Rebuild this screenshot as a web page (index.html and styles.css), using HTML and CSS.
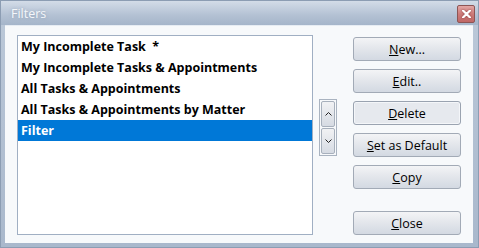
FILE: index.html
```html
<!DOCTYPE html>
<html lang="en">
<head>
    <meta charset="UTF-8">
    <meta name="viewport" content="width=device-width, initial-scale=1.0">
    <title>Filters</title>
    <link rel="stylesheet" href="styles.css">
</head>
<body>
    <div class="window">
        <div class="titlebar">
            <span class="title">Filters</span>
            <button class="close-x" aria-label="Close">
                <svg width="9" height="8" viewBox="0 0 9 8">
                    <path d="M1 0.5 L8 7.5 M8 0.5 L1 7.5" stroke="#ffffff" stroke-width="2.2" stroke-linecap="round"/>
                </svg>
            </button>
        </div>
        <div class="client">
            <ul class="filter-list">
                <li>My Incomplete Task&nbsp; *</li>
                <li>My Incomplete Tasks &amp; Appointments</li>
                <li>All Tasks &amp; Appointments</li>
                <li>All Tasks &amp; Appointments by Matter</li>
                <li class="selected">Filter</li>
            </ul>
            <div class="order-buttons">
                <button class="arrow-btn" aria-label="Move up">
                    <svg width="7" height="4" viewBox="0 0 7 4"><path d="M0.5 3.5 L3.5 0.5 L6.5 3.5" fill="none" stroke="#222" stroke-width="1"/></svg>
                </button>
                <button class="arrow-btn" aria-label="Move down">
                    <svg width="7" height="4" viewBox="0 0 7 4"><path d="M0.5 0.5 L3.5 3.5 L6.5 0.5" fill="none" stroke="#222" stroke-width="1"/></svg>
                </button>
            </div>
            <div class="actions">
                <button class="btn"><u>N</u>ew...</button>
                <button class="btn"><u>E</u>dit..</button>
                <button class="btn focused"><u>D</u>elete</button>
                <button class="btn"><u>S</u>et as Default</button>
                <button class="btn"><u>C</u>opy</button>
                <button class="btn close-btn"><u>C</u>lose</button>
            </div>
        </div>
    </div>
</body>
</html>
```

FILE: styles.css
```css
body {
    margin: 0;
    padding: 0;
    background: #ffffff;
}
.window {
    width: 479px;
    height: 248px;
    box-sizing: border-box;
    background: linear-gradient(to bottom, #bcc9d9, #a9b8cc);
    border: 1px solid #8c9db3;
    display: flex;
    flex-direction: column;
    font-family: "Open Sans", "Noto Sans", sans-serif;
}
.titlebar {
    height: 24px;
    display: flex;
    align-items: center;
    justify-content: space-between;
    padding: 0 3px 0 10px;
    background: linear-gradient(to bottom, #d3dce8, #b3c1d3 60%, #a5b5ca);
}
.title {
    color: #f4f7fa;
    font-size: 12.5px;
    text-shadow: 0 0 3px rgba(120, 140, 165, 0.6);
}
.close-x {
    width: 18px;
    height: 18px;
    padding: 0;
    border: 1px solid #8d5555;
    border-radius: 2px;
    background: linear-gradient(to bottom, #e3a7a5, #cd7b79 50%, #c06866);
    display: flex;
    align-items: center;
    justify-content: center;
    margin-top: 1px;
}
.close-x svg {
    filter: drop-shadow(0 0 1px #8a3c3c);
}
.client {
    flex: 1;
    margin: 0 5px 4px 4px;
    background: #f7f9fb;
    border-top: 1px solid #e6ecf3;
    display: flex;
    align-items: flex-start;
    padding: 9px 12px 8px 12px;
}
.filter-list {
    list-style: none;
    margin: 0;
    padding: 0;
    width: 296px;
    height: 200px;
    box-sizing: border-box;
    background: #ffffff;
    border: 1px solid #a0afc3;
    flex-shrink: 0;
}
.filter-list li {
    height: 21px;
    line-height: 21px;
    padding-left: 3px;
    font-size: 12.5px;
    font-weight: bold;
    color: #000000;
    white-space: nowrap;
}
.filter-list li.selected {
    background: #0078d7;
    color: #ffffff;
}
.order-buttons {
    margin: 64px 0 0 6px;
    width: 19px;
    box-sizing: border-box;
    border: 1px solid #a9b3c0;
    padding: 1px;
    display: flex;
    flex-direction: column;
    gap: 1px;
}
.arrow-btn {
    height: 26px;
    padding: 0;
    border: 1px solid #a7b0bc;
    border-radius: 2px;
    background: linear-gradient(to bottom, #f1f2f4, #d6dbe3);
    display: flex;
    align-items: center;
    justify-content: center;
}
.actions {
    margin: 2px 0 0 16px;
    display: flex;
    flex-direction: column;
    gap: 8px;
}
.btn {
    width: 108px;
    height: 24px;
    padding: 0;
    border: 1px solid #a2aab6;
    border-radius: 3px;
    background: linear-gradient(to bottom, #f3f4f6, #e4e7ec 45%, #d3d9e2);
    font-family: "Open Sans", "Noto Sans", sans-serif;
    font-size: 12.5px;
    color: #000000;
}
.btn.focused {
    background: #e6e9ee;
    box-shadow: inset 0 0 0 1px #f4f6f9;
    border-color: #9aa3b0;
}
.btn.close-btn {
    margin-top: 14px;
}
```
